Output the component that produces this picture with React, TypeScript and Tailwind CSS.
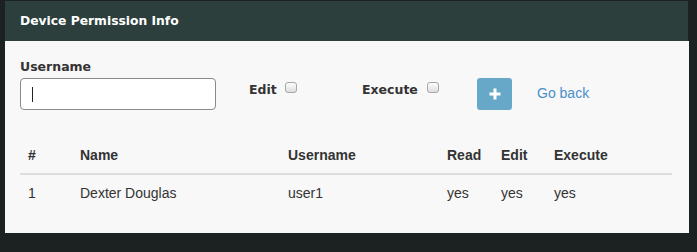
import React from "react";

const rows = [
  { id: 1, name: "Dexter Douglas", username: "user1", read: "yes", edit: "yes", execute: "yes" },
];

function Box() {
  return (
    <span className="inline-block w-[12px] h-[11px] rounded-[3px] border border-[#a6a6a6] bg-linear-to-b from-[#fdfdfd] to-[#dedede]"></span>
  );
}

export default function App() {
  return (
    <div className="min-h-[252px] bg-[#1c2122] pt-px pl-[5px] pr-[8px] pb-[19px]">
      <div className="w-[684px]">
        {/* Header */}
        <div className="h-[40px] w-[683px] bg-[#2c3f3d] flex items-center px-[15px] pt-px">
          <h1 className="text-white text-[12.3px] font-bold font-['DejaVu_Sans',sans-serif]">
            Device Permission Info
          </h1>
        </div>

        {/* Body */}
        <div className="bg-[#f8f8f8] px-[15px] pt-[17px] pb-[22px] text-[#333]">
          {/* Form row */}
          <div className="flex items-start font-['DejaVu_Sans',sans-serif]">
            <div className="w-[196px]">
              <label className="block text-[12.5px] leading-[18px] font-bold mb-[2px]">Username</label>
              <div className="relative">
                <input
                  type="text"
                  className="w-[196px] h-[32px] bg-white border border-[#8a8a8a] rounded-[4px] px-[12px] text-[13px] outline-none"
                />
                <span className="absolute left-[12px] top-[9px] w-px h-[15px] bg-[#222]"></span>
              </div>
            </div>

            <div className="ml-[33px] mt-[23px] w-[113px] flex items-start">
              <span className="text-[12.5px] leading-[18px] font-bold">Edit</span>
              <span className="ml-[8px] mt-px flex"><Box /></span>
            </div>

            <div className="mt-[23px] w-[115px] flex items-start">
              <span className="text-[12.5px] leading-[18px] font-bold">Execute</span>
              <span className="ml-[9px] mt-px flex"><Box /></span>
            </div>

            <button className="mt-[20px] w-[35px] h-[32px] rounded-[3px] bg-[#67a8c8] flex items-center justify-center">
              <svg width="12" height="12" viewBox="0 0 12 12">
                <path d="M6 0.5v11M0.5 6h11" stroke="#fff" strokeWidth="3" />
              </svg>
            </button>

            <a className="ml-[25px] mt-[25px] text-[14px] leading-[20px] text-[#4a8fca] font-['Liberation_Sans',Arial,sans-serif]">
              Go back
            </a>
          </div>

          {/* Table */}
          <table className="mt-[27px] w-[652px] text-[14px] leading-[20px] font-['Liberation_Sans',Arial,sans-serif] border-collapse">
            <thead>
              <tr className="border-b-2 border-[#dddddd] text-left">
                <th className="w-[52px] p-[8px] font-bold">#</th>
                <th className="w-[208px] p-[8px] font-bold">Name</th>
                <th className="w-[159px] p-[8px] font-bold">Username</th>
                <th className="w-[54px] p-[8px] font-bold">Read</th>
                <th className="w-[53px] p-[8px] font-bold">Edit</th>
                <th className="p-[8px] font-bold">Execute</th>
              </tr>
            </thead>
            <tbody>
              {rows.map((r) => (
                <tr key={r.id}>
                  <td className="p-[8px]">{r.id}</td>
                  <td className="p-[8px]">{r.name}</td>
                  <td className="p-[8px]">{r.username}</td>
                  <td className="p-[8px]">{r.read}</td>
                  <td className="p-[8px]">{r.edit}</td>
                  <td className="p-[8px]">{r.execute}</td>
                </tr>
              ))}
            </tbody>
          </table>
        </div>
      </div>
    </div>
  );
}
